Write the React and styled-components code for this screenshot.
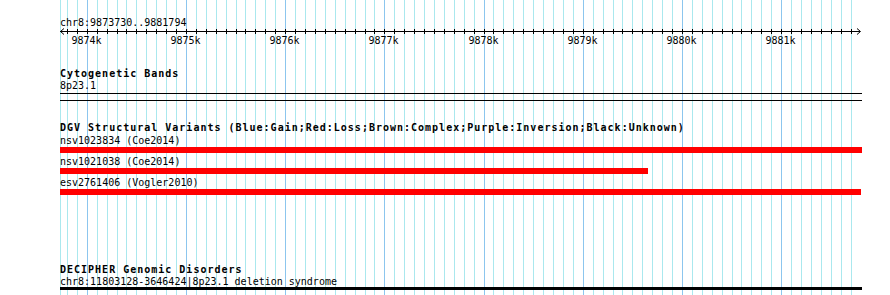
import styled, { createGlobalStyle } from 'styled-components';

const START = 9873730;
const END = 9881794;
const WIDTH = 802;
const SCALE = 800 / (END - START + 1);

const toX = (pos) => Math.round((pos - START) * SCALE);

const minorTicks = [];
for (let p = 9873800; p <= END; p += 100) minorTicks.push(p);
const majorTicks = minorTicks.filter((p) => p % 1000 === 0);

const variants = [
  { name: 'nsv1023834 (Coe2014)', width: 802 },
  { name: 'nsv1021038 (Coe2014)', width: 588 },
  { name: 'esv2761406 (Vogler2010)', width: 801 },
];

const GlobalStyle = createGlobalStyle`
  body {
    margin: 0;
    background: #ffffff;
    font-family: "DejaVu Sans Mono", "Liberation Mono", monospace;
    color: #000;
  }
`;

const Page = styled.div`
  display: flex;
  height: 295px;
  padding-left: 60px;
  overflow: hidden;
`;

const Track = styled.div`
  position: relative;
  width: ${WIDTH}px;
  display: flex;
  flex-direction: column;
`;

const GridLayer = styled.svg`
  position: absolute;
  top: 0;
  left: 0;
  width: ${WIDTH}px;
  height: 100%;
  z-index: 0;
`;

const Layer = styled.div`
  position: relative;
  z-index: 1;
  display: flex;
  flex-direction: column;
`;

const Text = styled.div`
  font-size: 10px;
  line-height: 12px;
  height: 10px;
  white-space: pre;
  margin-top: ${(p) => p.$gap || 0}px;
`;

const Title = styled(Text)`
  font-weight: bold;
  letter-spacing: 1px;
`;

const Rule = styled.div`
  height: ${(p) => p.$h || 1}px;
  width: ${(p) => p.$w || WIDTH}px;
  background: ${(p) => p.$color || '#000'};
  margin-top: ${(p) => p.$gap || 0}px;
`;

const RulerSvg = styled.svg`
  display: block;
  width: ${WIDTH}px;
  height: 20px;
  font-family: "DejaVu Sans Mono", "Liberation Mono", monospace;
  font-size: 10px;
`;

const Grid = () => (
  <GridLayer shapeRendering="crispEdges">
    <rect x={0} y={0} width={1} height={295} fill="#aae8ee" />
    {minorTicks.map((p) => (
      <rect
        key={p}
        x={toX(p)}
        y={0}
        width={1}
        height={295}
        fill={p % 1000 === 0 ? '#8cc6ee' : '#aae8ee'}
      />
    ))}
  </GridLayer>
);

const Ruler = () => (
  <RulerSvg shapeRendering="crispEdges">
    <rect x={0} y={4} width={800} height={1} fill="#000" />
    {minorTicks.map((p) => (
      <rect key={p} x={toX(p)} y={2} width={1} height={5} fill="#000" />
    ))}
    <polyline points="4,1.5 0.5,4.5 4,7.5" fill="none" stroke="#000" strokeWidth="1" shapeRendering="auto" />
    <polyline points="797,1.5 800.5,4.5 797,7.5" fill="none" stroke="#000" strokeWidth="1" shapeRendering="auto" />
    {majorTicks.map((p) => (
      <text key={p} x={toX(p) - 0.5} y={16.5} textAnchor="middle" fill="#000">
        {Math.round(p / 1000)}k
      </text>
    ))}
  </RulerSvg>
);

export default function App() {
  return (
    <>
      <GlobalStyle />
      <Page>
        <Track>
          <Grid />
          <Layer>
            <Text $gap={17}>chr8:9873730..9881794</Text>
            <Ruler />

            <Title $gap={21}>Cytogenetic Bands</Title>
            <Text $gap={2}>8p23.1</Text>
            <Rule $gap={3} />
            <Rule $gap={6} />

            <Title $gap={21}>
              DGV Structural Variants (Blue:Gain;Red:Loss;Brown:Complex;Purple:Inversion;Black:Unknown)
            </Title>
            {variants.map((v) => (
              <div key={v.name}>
                <Text $gap={3}>{v.name}</Text>
                <Rule $gap={2} $h={6} $w={v.width} $color="#ff0000" />
              </div>
            ))}

            <Title $gap={69}>DECIPHER Genomic Disorders</Title>
            <Text $gap={2}>chr8:11803128-3646424|8p23.1 deletion syndrome</Text>
            <Rule $gap={1} $h={3} />
          </Layer>
        </Track>
      </Page>
    </>
  );
}
